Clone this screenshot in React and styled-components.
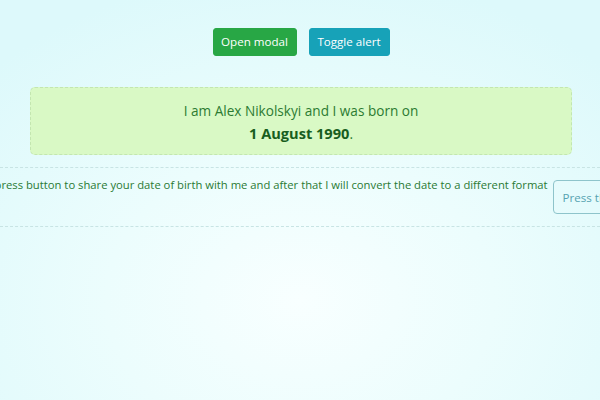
import React from "react";
import styled, { createGlobalStyle } from "styled-components";

const Global = createGlobalStyle`
  html, body { margin: 0; padding: 0; }
  body {
    width: 600px;
    height: 400px;
    overflow: hidden;
    font-family: "Open Sans", "Noto Sans", sans-serif;
    background: radial-gradient(ellipse 430px 330px at 300px 300px, #f8ffff 0%, #ecfdfd 45%, #ddf9fb 100%);
  }
`;

const Page = styled.div`
  width: 600px;
  height: 400px;
  padding-top: 28px;
  box-sizing: border-box;
  overflow: hidden;
`;

const Toolbar = styled.div`
  display: flex;
  justify-content: center;
  gap: 12px;
  padding-left: 2px;
`;

const Button = styled.button`
  height: 28px;
  width: ${(p) => p.$w}px;
  padding: 0;
  border: 1px solid ${(p) => p.$bg};
  border-radius: 3px;
  background: ${(p) => p.$bg};
  color: #ffffff;
  font-family: inherit;
  font-size: 11.6px;
  line-height: 26px;
  cursor: pointer;
`;

const Alert = styled.div`
  margin: 31px 28px 0 30px;
  height: 68px;
  box-sizing: border-box;
  border: 1px dashed #c3e6b0;
  border-radius: 5px;
  background: #d9f9c5;
  color: #2c7b32;
  text-align: center;
  font-size: 13.6px;
  line-height: 23px;
  padding-top: 11px;
`;

const Strong = styled.strong`
  color: #185e1e;
  font-size: 14.6px;
  font-weight: 700;
`;

const Row = styled.div`
  margin-top: 12px;
  height: 60px;
  box-sizing: border-box;
  border-top: 1px dashed #c8e4e4;
  border-bottom: 1px dashed #c8e4e4;
  display: flex;
  justify-content: center;
  align-items: flex-start;
  gap: 5px;
  padding-top: 8px;
  padding-left: 17px;
  white-space: nowrap;
`;

const RowText = styled.span`
  flex: none;
  color: #2a7a34;
  font-size: 11.25px;
  line-height: 18px;
`;

const OutlineButton = styled.button`
  flex: none;
  margin-top: 4px;
  height: 34px;
  padding: 0 9px;
  border: 1px solid #8ec4cb;
  border-radius: 4px;
  background: transparent;
  color: #56a3b1;
  font-family: inherit;
  font-size: 11.6px;
`;

export default function App() {
  return (
    <>
      <Global />
      <Page>
        <Toolbar>
          <Button $bg="#28a745" $w={84}>Open modal</Button>
          <Button $bg="#17a2b8" $w={81}>Toggle alert</Button>
        </Toolbar>
        <Alert>
          I am Alex Nikolskyi and I was born on
          <br />
          <Strong>1 August 1990</Strong>.
        </Alert>
        <Row>
          <RowText>
            Please, press button to share your date of birth with me and after that I will convert the date to a different format
          </RowText>
          <OutlineButton>Press the button</OutlineButton>
        </Row>
      </Page>
    </>
  );
}
